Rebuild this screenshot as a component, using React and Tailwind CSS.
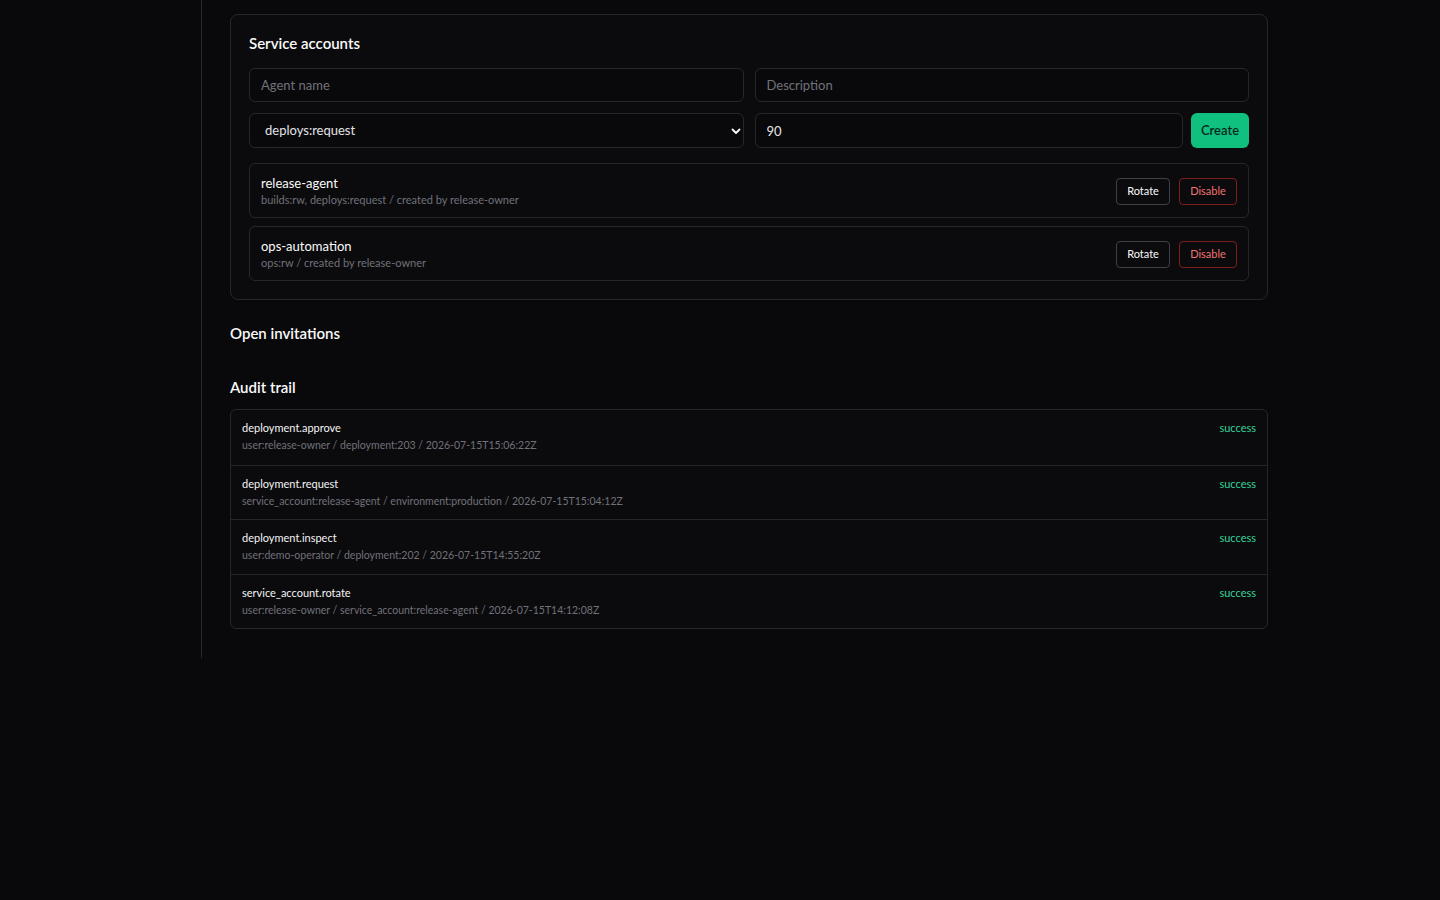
import React, { useState } from 'react';

const accounts = [
  { name: 'release-agent', scopes: 'builds:rw, deploys:request', owner: 'release-owner' },
  { name: 'ops-automation', scopes: 'ops:rw', owner: 'release-owner' },
];

const auditEvents = [
  { action: 'deployment.approve', detail: 'user:release-owner / deployment:203 / 2026-07-15T15:06:22Z', status: 'success' },
  { action: 'deployment.request', detail: 'service_account:release-agent / environment:production / 2026-07-15T15:04:12Z', status: 'success' },
  { action: 'deployment.inspect', detail: 'user:demo-operator / deployment:202 / 2026-07-15T14:55:20Z', status: 'success' },
  { action: 'service_account.rotate', detail: 'user:release-owner / service_account:release-agent / 2026-07-15T14:12:08Z', status: 'success' },
];

const fieldClass =
  'h-[34px] w-full rounded-md border border-[#27272a] bg-[#09090b] px-[11px] text-[13px] text-[#e4e4e7] placeholder:text-[#71717a] outline-none';

const ServiceAccounts = () => {
  const [agentName, setAgentName] = useState('');
  const [description, setDescription] = useState('');
  const [scope, setScope] = useState('deploys:request');
  const [ttl, setTtl] = useState('90');

  return (
    <section className="rounded-lg border border-[#27272a] bg-[#0b0b0d] px-[18px] pt-[18px] pb-[18px]">
      <h2 className="text-[15px] font-semibold text-[#fafafa] leading-5">Service accounts</h2>
      <div className="mt-[15px] grid grid-cols-2 gap-x-[11px] gap-y-[11px]">
        <input
          className={fieldClass}
          placeholder="Agent name"
          value={agentName}
          onChange={(e) => setAgentName(e.target.value)}
        />
        <input
          className={fieldClass}
          placeholder="Description"
          value={description}
          onChange={(e) => setDescription(e.target.value)}
        />
        <div className="relative">
          <select
            className={`${fieldClass} h-[35px] appearance-none pl-[15px]`}
            value={scope}
            onChange={(e) => setScope(e.target.value)}
          >
            <option>deploys:request</option>
            <option>builds:rw</option>
            <option>ops:rw</option>
          </select>
          <svg
            className="pointer-events-none absolute right-[3px] top-1/2 -translate-y-1/2"
            width="10"
            height="10"
            viewBox="0 0 10 10"
            fill="none"
          >
            <path d="M1.5 3.5 5 7l3.5-3.5" stroke="#fafafa" strokeWidth="1.8" strokeLinecap="round" strokeLinejoin="round" />
          </svg>
        </div>
        <div className="flex gap-2">
          <input
            className={`${fieldClass} h-[35px]`}
            value={ttl}
            onChange={(e) => setTtl(e.target.value)}
          />
          <button className="h-[35px] w-[58px] shrink-0 rounded-md bg-[#10c07f] text-[13px] font-semibold text-[#04291a]">
            Create
          </button>
        </div>
      </div>

      <div className="mt-[15px] flex flex-col gap-2">
        {accounts.map((acct) => (
          <div
            key={acct.name}
            className="flex h-[55px] items-center justify-between rounded-md border border-[#27272a] px-[11px]"
          >
            <div className="flex flex-col">
              <span className="text-[13px] leading-[17px] text-[#fafafa]">{acct.name}</span>
              <span className="text-[11px] leading-[15px] text-[#71717a]">
                {acct.scopes} / created by {acct.owner}
              </span>
            </div>
            <div className="mt-[1px] flex gap-[9px]">
              <button className="h-[27px] w-[54px] rounded border border-[#3f3f46] text-[11px] text-[#fafafa]">
                Rotate
              </button>
              <button className="h-[27px] w-[58px] rounded border border-[#7f1d1d] text-[11px] text-[#ef7373]">
                Disable
              </button>
            </div>
          </div>
        ))}
      </div>
    </section>
  );
};

const AuditTrail = () => (
  <section className="mt-[34px]">
    <h2 className="text-[15px] font-semibold text-[#fafafa] leading-5">Audit trail</h2>
    <div className="mt-[12px] rounded-md border border-[#27272a] bg-[#0b0b0d]">
      {auditEvents.map((ev, i) => (
        <div
          key={ev.action}
          className={`flex h-[54.5px] justify-between px-[11px] pt-[10px] ${i > 0 ? 'border-t border-[#27272a]' : ''}`}
        >
          <div className="flex flex-col gap-[3px]">
            <span className="text-[11px] leading-[15px] text-[#f4f4f5]">{ev.action}</span>
            <span className="text-[10.5px] leading-[15px] text-[#71717a]">{ev.detail}</span>
          </div>
          <span className="text-[11px] leading-[15px] text-[#34d399]">{ev.status}</span>
        </div>
      ))}
    </div>
  </section>
);

export default function App() {
  return (
    <div
      className="min-h-screen bg-[#09090b] text-[#fafafa]"
      style={{ fontFamily: '"Segoe UI", Lato, "Noto Sans", sans-serif' }}
    >
      <div className="flex">
        <aside className="w-[202px] shrink-0 border-r border-[#27272a]" />
        <main className="w-[1066px] pl-[28px] pt-[14px] pb-[29px]">
          <ServiceAccounts />
          <section className="mt-[23px]">
            <h2 className="text-[15px] font-semibold text-[#fafafa] leading-5">Open invitations</h2>
          </section>
          <AuditTrail />
        </main>
      </div>
    </div>
  );
}
